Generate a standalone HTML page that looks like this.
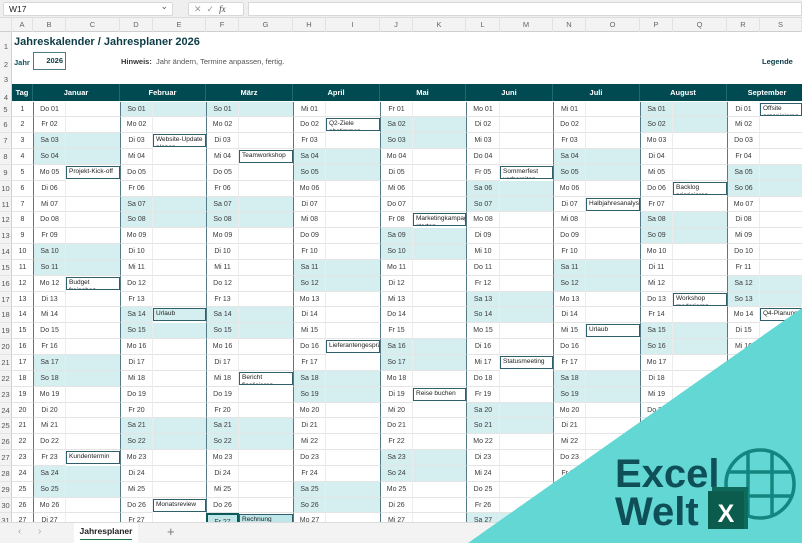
<!DOCTYPE html>
<html><head><meta charset="utf-8">
<style>
*{margin:0;padding:0;box-sizing:border-box}
body{width:802px;height:543px;overflow:hidden;background:#fff;font-family:"Liberation Sans",sans-serif;position:relative}
.fb{position:absolute;left:0;top:0;width:802px;height:18px;background:#efefef;border-bottom:1px solid #dcdcdc}
.nb{position:absolute;left:3px;top:2px;width:170px;height:14px;background:#fff;border:1px solid #d8d8d8;border-radius:2px;font-size:8.5px;line-height:12px;padding-left:5px;color:#222}
.nb:after{content:"⌄";position:absolute;right:4px;top:-3px;font-size:9px;color:#555}
.fx{position:absolute;left:188px;top:2px;width:56px;height:14px;background:#fff;border:1px solid #d8d8d8;border-radius:2px;font-size:9px;line-height:12px;color:#999;padding-left:5px;letter-spacing:5px}
.fi{position:absolute;left:248px;top:2px;width:554px;height:14px;background:#fff;border:1px solid #d8d8d8}
.ch{position:absolute;left:0;top:18px;height:14px;display:grid;grid-template-columns:12px 21px 33px 54px 33px 53px 33px 54px 33px 54px 33px 53px 34px 53px 33px 54px 33px 54px 33px 42px;background:#f3f3f3;border-bottom:1px solid #cfcfcf;width:802px}
.ch span{font-size:7.5px;color:#666;text-align:center;line-height:14px;border-right:1px solid #e2e2e2}
.rn{position:absolute;left:0;top:32px;width:12px;height:490px;background:#f3f3f3;border-right:1px solid #d0d0d0}
.rn span{position:absolute;left:0;width:12px;text-align:center;font-size:7.5px;color:#555}
.title{position:absolute;left:14px;top:36px;font-size:11px;font-weight:bold;color:#0d3c46}
.jahr{position:absolute;left:14px;top:58px;font-size:7.5px;font-weight:bold;color:#0d5560}
.yb{position:absolute;left:33px;top:52px;width:33px;height:18px;border:1px solid #4f7b86;font-size:7.5px;font-weight:bold;color:#0d3c46;text-align:right;padding-right:2px;line-height:16px}
.hin{position:absolute;left:121px;top:57px;font-size:7.5px;color:#555}
.hin b{color:#333}
.leg{position:absolute;left:762px;top:57px;font-size:7.5px;font-weight:bold;color:#0d3c46}
.hdr{position:absolute;left:12px;top:84px;width:790px;height:17px;background:#024a52;display:grid;grid-template-columns:21px 87px 86px 87px 87px 86px 87px 87px 87px 81px}
.hdr span{color:#fff;font-size:7.5px;font-weight:bold;text-align:center;line-height:17px;border-right:1px solid #1e6a72}
.g{position:absolute;left:0;top:101.5px;width:802px;height:420.5px;overflow:hidden;display:grid;grid-template-columns:12px 21px 33px 54px 33px 53px 33px 54px 33px 54px 33px 53px 34px 53px 33px 54px 33px 54px 33px 42px;grid-auto-rows:15.85px}
.g i{font-style:normal;border-bottom:1px solid #e4e4e4;font-size:7px;color:#3a3a3a;line-height:15px;overflow:hidden;white-space:nowrap}
.g i:nth-child(odd){text-align:center;border-left:1px solid #557984;border-right:1px solid #ececec}
.g i.r{background:#f3f3f3;color:#555;border-left:none;border-right:1px solid #d0d0d0;font-size:7.5px;border-bottom:1px solid #e4e4e4}
.g i.t{text-align:center;border-right:none}
.g i.w{background:#d5eef0}
.g i.e{border:1px solid #2f5f6b;white-space:normal;line-height:8px;padding:1px 2px;font-size:6.5px;height:13px;align-self:start;margin-top:1px;color:#222}
.g i.sel{border:2px solid #0b5a5a;background:#bfe6e8}
.g i.ef{background:#bfe6e8}
.tabs{position:absolute;left:0;top:522px;width:802px;height:21px;background:#f3f3f3;border-top:1px solid #dcdcdc}
.tabs .a{position:absolute;top:3px;font-size:10px;color:#aaa}
.tab{position:absolute;left:74px;top:0;width:64px;height:20px;background:#fff;font-size:8.5px;font-weight:bold;color:#222;text-align:center;line-height:17px}
.tab:after{content:"";position:absolute;left:6px;right:6px;bottom:3px;height:1.5px;background:#1d7a4a}
.plus{position:absolute;left:167px;top:1px;font-size:13px;color:#777}
</style></head><body>
<div class="fb"><div class="nb">W17</div><div class="fx">✕✓<i style="font-family:'Liberation Serif';color:#444;letter-spacing:0">fx</i></div><div class="fi"></div></div>
<div class="ch"><span></span><span>A</span><span>B</span><span>C</span><span>D</span><span>E</span><span>F</span><span>G</span><span>H</span><span>I</span><span>J</span><span>K</span><span>L</span><span>M</span><span>N</span><span>O</span><span>P</span><span>Q</span><span>R</span><span>S</span></div>
<div class="rn"><span style="top:10px">1</span><span style="top:28px">2</span><span style="top:43px">3</span><span style="top:61px">4</span></div>
<div class="title">Jahreskalender / Jahresplaner 2026</div>
<div class="jahr">Jahr</div>
<div class="yb">2026</div>
<div class="hin"><b>Hinweis:</b>&nbsp; Jahr ändern, Termine anpassen, fertig.</div>
<div class="leg">Legende</div>
<div class="hdr"><span>Tag</span><span>Januar</span><span>Februar</span><span>März</span><span>April</span><span>Mai</span><span>Juni</span><span>Juli</span><span>August</span><span>September</span></div>
<div class="g">
<i class=r>5</i><i class=t>1</i><i>Do 01</i><i></i><i class=w>So 01</i><i class=w></i><i class=w>So 01</i><i class=w></i><i>Mi 01</i><i></i><i>Fr 01</i><i></i><i>Mo 01</i><i></i><i>Mi 01</i><i></i><i class=w>Sa 01</i><i class=w></i><i>Di 01</i><i class=e>Offsite organisieren</i>
<i class=r>6</i><i class=t>2</i><i>Fr 02</i><i></i><i>Mo 02</i><i></i><i>Mo 02</i><i></i><i>Do 02</i><i class=e>Q2-Ziele abstimmen</i><i class=w>Sa 02</i><i class=w></i><i>Di 02</i><i></i><i>Do 02</i><i></i><i class=w>So 02</i><i class=w></i><i>Mi 02</i><i></i>
<i class=r>7</i><i class=t>3</i><i class=w>Sa 03</i><i class=w></i><i>Di 03</i><i class=e>Website-Update planen</i><i>Di 03</i><i></i><i>Fr 03</i><i></i><i class=w>So 03</i><i class=w></i><i>Mi 03</i><i></i><i>Fr 03</i><i></i><i>Mo 03</i><i></i><i>Do 03</i><i></i>
<i class=r>8</i><i class=t>4</i><i class=w>So 04</i><i class=w></i><i>Mi 04</i><i></i><i>Mi 04</i><i class=e>Teamworkshop</i><i class=w>Sa 04</i><i class=w></i><i>Mo 04</i><i></i><i>Do 04</i><i></i><i class=w>Sa 04</i><i class=w></i><i>Di 04</i><i></i><i>Fr 04</i><i></i>
<i class=r>9</i><i class=t>5</i><i>Mo 05</i><i class=e>Projekt-Kick-off</i><i>Do 05</i><i></i><i>Do 05</i><i></i><i class=w>So 05</i><i class=w></i><i>Di 05</i><i></i><i>Fr 05</i><i class=e>Sommerfest vorbereiten</i><i class=w>So 05</i><i class=w></i><i>Mi 05</i><i></i><i class=w>Sa 05</i><i class=w></i>
<i class=r>10</i><i class=t>6</i><i>Di 06</i><i></i><i>Fr 06</i><i></i><i>Fr 06</i><i></i><i>Mo 06</i><i></i><i>Mi 06</i><i></i><i class=w>Sa 06</i><i class=w></i><i>Mo 06</i><i></i><i>Do 06</i><i class=e>Backlog priorisieren</i><i class=w>So 06</i><i class=w></i>
<i class=r>11</i><i class=t>7</i><i>Mi 07</i><i></i><i class=w>Sa 07</i><i class=w></i><i class=w>Sa 07</i><i class=w></i><i>Di 07</i><i></i><i>Do 07</i><i></i><i class=w>So 07</i><i class=w></i><i>Di 07</i><i class=e>Halbjahresanalyse</i><i>Fr 07</i><i></i><i>Mo 07</i><i></i>
<i class=r>12</i><i class=t>8</i><i>Do 08</i><i></i><i class=w>So 08</i><i class=w></i><i class=w>So 08</i><i class=w></i><i>Mi 08</i><i></i><i>Fr 08</i><i class=e>Marketingkampagne starten</i><i>Mo 08</i><i></i><i>Mi 08</i><i></i><i class=w>Sa 08</i><i class=w></i><i>Di 08</i><i></i>
<i class=r>13</i><i class=t>9</i><i>Fr 09</i><i></i><i>Mo 09</i><i></i><i>Mo 09</i><i></i><i>Do 09</i><i></i><i class=w>Sa 09</i><i class=w></i><i>Di 09</i><i></i><i>Do 09</i><i></i><i class=w>So 09</i><i class=w></i><i>Mi 09</i><i></i>
<i class=r>14</i><i class=t>10</i><i class=w>Sa 10</i><i class=w></i><i>Di 10</i><i></i><i>Di 10</i><i></i><i>Fr 10</i><i></i><i class=w>So 10</i><i class=w></i><i>Mi 10</i><i></i><i>Fr 10</i><i></i><i>Mo 10</i><i></i><i>Do 10</i><i></i>
<i class=r>15</i><i class=t>11</i><i class=w>So 11</i><i class=w></i><i>Mi 11</i><i></i><i>Mi 11</i><i></i><i class=w>Sa 11</i><i class=w></i><i>Mo 11</i><i></i><i>Do 11</i><i></i><i class=w>Sa 11</i><i class=w></i><i>Di 11</i><i></i><i>Fr 11</i><i></i>
<i class=r>16</i><i class=t>12</i><i>Mo 12</i><i class=e>Budget freigeben</i><i>Do 12</i><i></i><i>Do 12</i><i></i><i class=w>So 12</i><i class=w></i><i>Di 12</i><i></i><i>Fr 12</i><i></i><i class=w>So 12</i><i class=w></i><i>Mi 12</i><i></i><i class=w>Sa 12</i><i class=w></i>
<i class=r>17</i><i class=t>13</i><i>Di 13</i><i></i><i>Fr 13</i><i></i><i>Fr 13</i><i></i><i>Mo 13</i><i></i><i>Mi 13</i><i></i><i class=w>Sa 13</i><i class=w></i><i>Mo 13</i><i></i><i>Do 13</i><i class=e>Workshop moderieren</i><i class=w>So 13</i><i class=w></i>
<i class=r>18</i><i class=t>14</i><i>Mi 14</i><i></i><i class=w>Sa 14</i><i class="w e">Urlaub</i><i class=w>Sa 14</i><i class=w></i><i>Di 14</i><i></i><i>Do 14</i><i></i><i class=w>So 14</i><i class=w></i><i>Di 14</i><i></i><i>Fr 14</i><i></i><i>Mo 14</i><i class=e style="white-space:nowrap">Q4-Planung</i>
<i class=r>19</i><i class=t>15</i><i>Do 15</i><i></i><i class=w>So 15</i><i class=w></i><i class=w>So 15</i><i class=w></i><i>Mi 15</i><i></i><i>Fr 15</i><i></i><i>Mo 15</i><i></i><i>Mi 15</i><i class=e>Urlaub</i><i class=w>Sa 15</i><i class=w></i><i>Di 15</i><i></i>
<i class=r>20</i><i class=t>16</i><i>Fr 16</i><i></i><i>Mo 16</i><i></i><i>Mo 16</i><i></i><i>Do 16</i><i class=e>Lieferantengespräch</i><i class=w>Sa 16</i><i class=w></i><i>Di 16</i><i></i><i>Do 16</i><i></i><i class=w>So 16</i><i class=w></i><i>Mi 16</i><i></i>
<i class=r>21</i><i class=t>17</i><i class=w>Sa 17</i><i class=w></i><i>Di 17</i><i></i><i>Di 17</i><i></i><i>Fr 17</i><i></i><i class=w>So 17</i><i class=w></i><i>Mi 17</i><i class=e>Statusmeeting</i><i>Fr 17</i><i></i><i>Mo 17</i><i></i><i>Do 17</i><i></i>
<i class=r>22</i><i class=t>18</i><i class=w>So 18</i><i class=w></i><i>Mi 18</i><i></i><i>Mi 18</i><i class=e>Bericht finalisieren</i><i class=w>Sa 18</i><i class=w></i><i>Mo 18</i><i></i><i>Do 18</i><i></i><i class=w>Sa 18</i><i class=w></i><i>Di 18</i><i></i><i>Fr 18</i><i></i>
<i class=r>23</i><i class=t>19</i><i>Mo 19</i><i></i><i>Do 19</i><i></i><i>Do 19</i><i></i><i class=w>So 19</i><i class=w></i><i>Di 19</i><i class=e>Reise buchen</i><i>Fr 19</i><i></i><i class=w>So 19</i><i class=w></i><i>Mi 19</i><i></i><i class=w>Sa 19</i><i class=w></i>
<i class=r>24</i><i class=t>20</i><i>Di 20</i><i></i><i>Fr 20</i><i></i><i>Fr 20</i><i></i><i>Mo 20</i><i></i><i>Mi 20</i><i></i><i class=w>Sa 20</i><i class=w></i><i>Mo 20</i><i></i><i>Do 20</i><i></i><i class=w>So 20</i><i class=w></i>
<i class=r>25</i><i class=t>21</i><i>Mi 21</i><i></i><i class=w>Sa 21</i><i class=w></i><i class=w>Sa 21</i><i class=w></i><i>Di 21</i><i></i><i>Do 21</i><i></i><i class=w>So 21</i><i class=w></i><i>Di 21</i><i></i><i>Fr 21</i><i></i><i>Mo 21</i><i></i>
<i class=r>26</i><i class=t>22</i><i>Do 22</i><i></i><i class=w>So 22</i><i class=w></i><i class=w>So 22</i><i class=w></i><i>Mi 22</i><i></i><i>Fr 22</i><i></i><i>Mo 22</i><i></i><i>Mi 22</i><i></i><i class=w>Sa 22</i><i class=w></i><i>Di 22</i><i></i>
<i class=r>27</i><i class=t>23</i><i>Fr 23</i><i class=e>Kundentermin</i><i>Mo 23</i><i></i><i>Mo 23</i><i></i><i>Do 23</i><i></i><i class=w>Sa 23</i><i class=w></i><i>Di 23</i><i></i><i>Do 23</i><i></i><i class=w>So 23</i><i class=w></i><i>Mi 23</i><i></i>
<i class=r>28</i><i class=t>24</i><i class=w>Sa 24</i><i class=w></i><i>Di 24</i><i></i><i>Di 24</i><i></i><i>Fr 24</i><i></i><i class=w>So 24</i><i class=w></i><i>Mi 24</i><i></i><i>Fr 24</i><i></i><i>Mo 24</i><i></i><i>Do 24</i><i></i>
<i class=r>29</i><i class=t>25</i><i class=w>So 25</i><i class=w></i><i>Mi 25</i><i></i><i>Mi 25</i><i></i><i class=w>Sa 25</i><i class=w></i><i>Mo 25</i><i></i><i>Do 25</i><i></i><i class=w>Sa 25</i><i class=w></i><i>Di 25</i><i></i><i>Fr 25</i><i></i>
<i class=r>30</i><i class=t>26</i><i>Mo 26</i><i></i><i>Do 26</i><i class=e>Monatsreview</i><i>Do 26</i><i></i><i class=w>So 26</i><i class=w></i><i>Di 26</i><i></i><i>Fr 26</i><i></i><i class=w>So 26</i><i class=w></i><i>Mi 26</i><i></i><i class=w>Sa 26</i><i class=w></i>
<i class=r>31</i><i class=t>27</i><i>Di 27</i><i></i><i>Fr 27</i><i></i><i class=sel>Fr 27</i><i class="e ef">Rechnung</i><i>Mo 27</i><i></i><i>Mi 27</i><i></i><i class=w>Sa 27</i><i class=w></i><i>Mo 27</i><i></i><i>Do 27</i><i></i><i class=w>So 27</i><i class=w></i>
</div>
<div class="tabs"><span class="a" style="left:18px">‹</span><span class="a" style="left:38px">›</span><div class="tab">Jahresplaner</div><span class="plus">+</span></div>
<svg style="position:absolute;left:0;top:0" width="802" height="543" viewBox="0 0 802 543">
<polygon points="468,543 802,308 802,543" fill="#62d7d4"/>
<text x="615" y="487" font-family="Liberation Sans" font-weight="bold" font-size="40" fill="#0f4f57">Excel</text>
<text x="615" y="525" font-family="Liberation Sans" font-weight="bold" font-size="40" fill="#0f4f57">Welt</text>
<g fill="none" stroke="#14857f" stroke-width="3.5">
<circle cx="760" cy="484" r="34"/>
<line x1="727" y1="472" x2="793" y2="472"/>
<line x1="727" y1="496" x2="793" y2="496"/>
<line x1="748" y1="451" x2="748" y2="517"/>
<line x1="772" y1="451" x2="772" y2="517"/>
</g>
<rect x="712" y="487" width="36" height="42" fill="#0e6a5a"/>
<rect x="708" y="491" width="36" height="38" fill="#0c5c4e"/>
<text x="726" y="522" text-anchor="middle" font-family="Liberation Sans" font-weight="bold" font-size="25" fill="#fff">X</text>
</svg>
</body></html>
